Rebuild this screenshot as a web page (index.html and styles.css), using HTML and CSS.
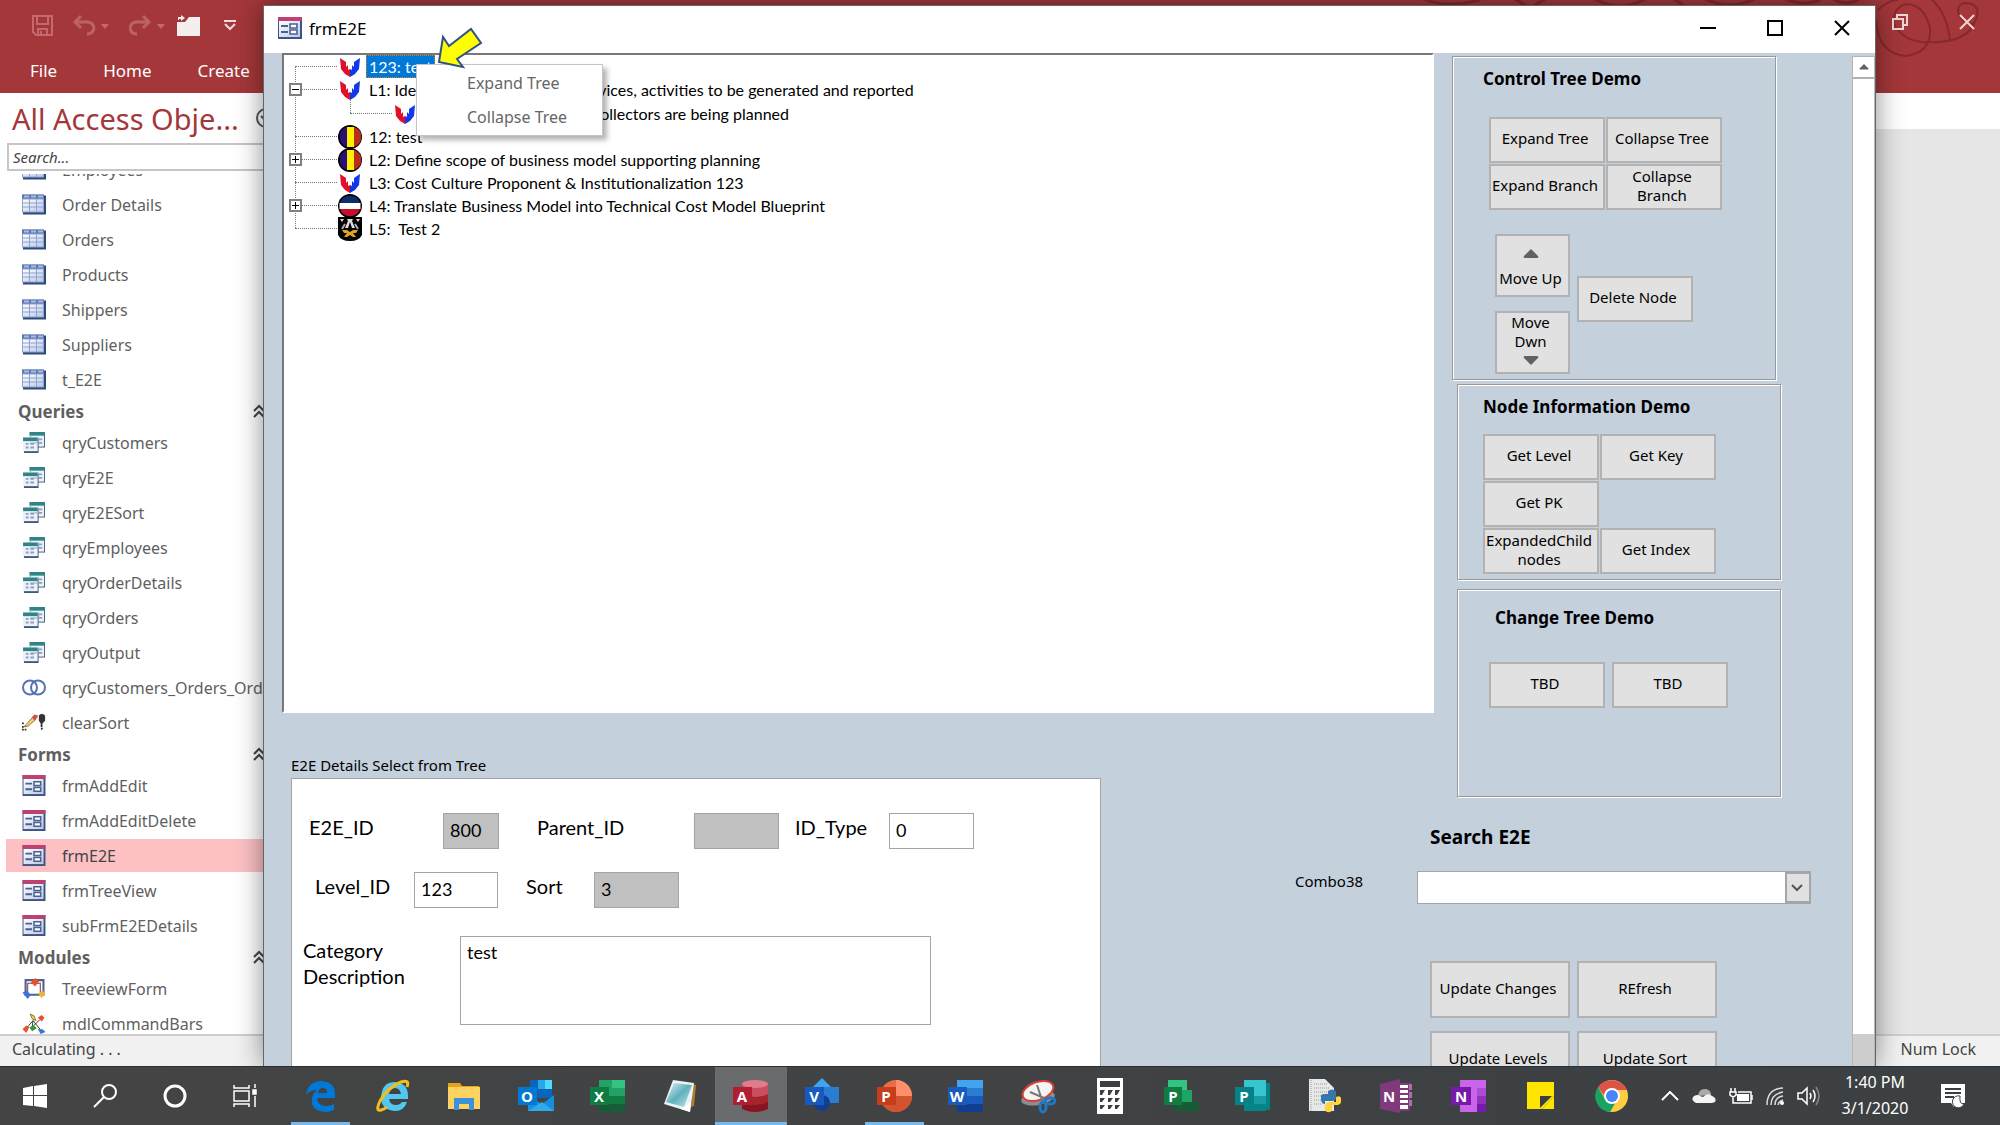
FILE: index.html
```html
<!DOCTYPE html>
<html lang="en">
  <head>
    <meta charset="UTF-8" />
    <meta name="viewport" content="width=device-width, initial-scale=1.0" />
    <title>frmE2E</title>
    <link rel="stylesheet" href="styles.css">
  </head>

  <body>
    <!-- shared icons -->
    <svg class="defs" aria-hidden="true">
      <defs>
        <linearGradient id="cell" x1="0" y1="0" x2="1" y2="1">
          <stop offset="0" stop-color="#fff" />
          <stop offset="1" stop-color="#b9c9ea" />
        </linearGradient>
        <linearGradient id="glass" x1="0" y1="0" x2="1" y2="1">
          <stop offset="0" stop-color="#e4f3f5" />
          <stop offset=".5" stop-color="#5fb0bd" />
          <stop offset="1" stop-color="#c9e8ec" />
        </linearGradient>
      </defs>
      <symbol id="table" viewBox="0 0 24 20">
        <path fill="#2f4a78" d="M1 1h23v19H1z" />
        <path fill="#8fa3cc" d="M0 0h22v18H0z" />
        <path fill="#5c78b8" d="M0 0h22v4H0z" />
        <path fill="#a9bbdf" d="M2 1h5v2H2zM9 1h5v2H9zM16 1h5v2h-5z" />
        <path fill="url(#cell)" d="M1 5h6v3H1zM8 5h6v3H8zM15 5h6v3h-6zM1 9h6v3H1zM8 9h6v3H8zM15 9h6v3h-6zM1 13h6v4H1zM8 13h6v4H8zM15 13h6v4h-6z" />
      </symbol>
      <symbol id="query" viewBox="0 0 24 23">
        <path fill="#3f5878" d="M8 1h16v16H8z" />
        <path fill="#edf2fa" d="M8 0h15v16H8z" />
        <path fill="#2f8585" d="M7 0h17v4H7z" />
        <path fill="#8fa0bd" d="M17 7h4v2h-4zM17 11h4v2h-4z" />
        <path fill="#3f5878" d="M1 7h16v16H1z" />
        <path fill="#edf2fa" d="M0 6h16v15H0z" />
        <path fill="#2f8585" d="M0 6h16v4H0z" />
        <path fill="#8fa0bd" d="M3 12h3v2H3zM8 12h4v2H8zM3 16h3v2H3zM8 16h4v2H8z" />
        <path fill="none" stroke="#8aa6ba" d="M8 6V3m0 9h9V6" />
      </symbol>
      <symbol id="union" viewBox="0 0 24 16">
        <g fill="none" stroke="#5673b8" stroke-width="2">
          <ellipse cx="8" cy="8" rx="7" ry="7" />
          <ellipse cx="16" cy="8" rx="7" ry="7" />
        </g>
      </symbol>
      <symbol id="erase" viewBox="0 0 27 20">
        <path fill="#333" d="M0 10h2v2H0zM3 13h2v2H3zM0 14h2v2H0zM0 17h2v2H0zM3 17h2v2H3z" />
        <path fill="#f0d070" stroke="#8a6b2a" d="M4 13 12 4l3 3-8 7-4 1z" />
        <path fill="#cf5246" d="m11 4 3-3 4 1-1 3-3 3z" />
        <path fill="#333" d="M19 2q3-3 7 0v6l-3 3v4h-2v-4l-2-3zM21 16h3l-2 3z" />
      </symbol>
      <symbol id="form" viewBox="0 0 24 22">
        <path fill="#3f5380" d="M0 0h24v22H0z" />
        <path fill="url(#cell)" d="M1 4h21v16H1z" />
        <path fill="#c0406f" d="M0 0h24v4H0z" />
        <path fill="#4a608f" d="M3 8h7v2H3zM3 14h7v2H3z" />
        <path fill="#fff" stroke="#4a608f" stroke-width="1.6" d="M12 7h7v4h-7zM12 13h7v4h-7z" />
      </symbol>
      <symbol id="module" viewBox="0 0 22 20">
        <path fill="#fff" stroke="#4c648f" stroke-width="2" d="M3 2h17v14H3z" />
        <path fill="none" stroke="#8a4040" d="M5 15V5h12v10" />
        <path fill="#e8502c" d="m8 4 4-4 4 3-4 5z" />
        <path fill="#3d72d8" d="m0 14 4-2 4 4-3 4z" />
        <path fill="#e6b92e" d="m15 15 4-3 3 3-4 4z" />
      </symbol>
      <symbol id="classmod" viewBox="0 0 24 22">
        <path fill="none" stroke="#333" d="m4 16 7-8 9 11M11 8l-1 7 8-8" />
        <path fill="#e8d45a" stroke="#8a7a2a" d="m8 1 4 2 2 5-4-2z" />
        <path fill="#e8502c" d="m16 5 4-3 3 3-3 4zM0 17l4-4 3 2-3 6z" />
        <path fill="#3a9a3a" d="m7 15 5-2 3 3-5 3z" />
        <path fill="#3d72d8" d="m16 17 5 0 3 3-5 2z" />
      </symbol>
      <symbol id="shield" viewBox="0 0 24 24">
        <path fill="#e0102c" d="m2 3 6 4v5l2-2v5l2-1v8l-5-3-4-5z" />
        <path fill="#1238e8" d="m22 3-6 4v5l-2-2v5l-2-1v8l5-3 4-5z" />
      </symbol>
      <symbol id="tricolor" viewBox="0 0 24 24">
        <circle cx="12" cy="12" r="12" fill="#000" />
        <path fill="#2b0f78" d="M9 2v20A10.500 10.500 0 0 1 9 2z" />
        <path fill="#fff000" d="M9 2h7v20H9z" />
        <path fill="#b92d1c" d="M16 2a10.500 10.500 0 0 1 0 20z" />
      </symbol>
      <symbol id="bands" viewBox="0 0 24 24">
        <circle cx="12" cy="12" r="12" fill="#000" />
        <path fill="#0f2d68" d="M2 9a10.500 10.500 0 0 1 20 0z" />
        <path fill="#fff" d="M1.500 9h21v6h-21z" />
        <path fill="#c2102c" d="M2 15a10.500 10.500 0 0 0 20 0z" />
      </symbol>
      <symbol id="crest" viewBox="0 0 24 24">
        <path d="M0 0h24v18q-3 6-12 6T0 18z" />
        <path fill="#ddd" d="M2 2h4L4 5zM22 2h-4l2 3zM9 2h6l-1 2 3 7h-3l-2-6-2 6H7l3-7z" />
        <path fill="none" stroke="#aaa" stroke-width="2" d="m4 12 3-5m13 5-3-5" />
        <path fill="#e3a31c" d="M4 13h5l3 2 3-2h5l-2 3h-3l3 4h-3l-3-2-3 2H6l3-4H6z" />
      </symbol>
      <symbol id="up" viewBox="0 0 16 10"><path fill="#5f6366" d="M2 9q-2 0-1-2l7-7 7 7q1 2-1 2z" /></symbol>
      <symbol id="chev" viewBox="0 0 12 14">
        <path fill="none" stroke="#444" stroke-width="2" d="m1 7 5-5 5 5M1 13l5-5 5 5" />
      </symbol>
    </svg>

    <main class="access">
      <header class="ribbon">
        <svg class="swirl" width="600" height="93" viewBox="0 0 600 93" aria-hidden="true">
          <g fill="none" stroke="#86282c" stroke-width="3">
            <path d="M20-4q20 14 60 4M110-4l20 12 20-12M190-4q30 20 60 0M270-4l14 10M300-4q30 18 60 0M380-4q20 12 40 4M430-4q14 14 34 0" />
            <path stroke-width="2" d="M476 20q2 34 30 36 26-4 24-28-6-24-24-24-14 4-12 20 8 16 28 18 36 2 48-12 14-20 2-26-14-4-14 8 4 12 16 12M478 10q10-10 20-10M528-4q20 16 22 46" />
          </g>
        </svg>
        <div class="quick">
          <button aria-label="Save">
            <svg width="21" height="21" viewBox="0 0 21 21" fill="none" stroke="#c26a6d" stroke-width="2">
              <path d="M1 1h19v19H4l-3-3zM5 1v8h11V1M6 20v-6h9v6M9 16v3" />
            </svg>
          </button>
          <button aria-label="Undo">
            <svg width="36" height="21" viewBox="0 0 36 21" fill="none" stroke="#bd6265" stroke-width="3">
              <path d="M8 1 2 7l6 6M2 7h12q6 0 7 6-1 6-7 6" /><path fill="#c26a6d" stroke="none" d="M28 9h8l-4 5z" />
            </svg>
          </button>
          <button aria-label="Redo">
            <svg width="36" height="21" viewBox="0 0 36 21" fill="none" stroke="#bd6265" stroke-width="3">
              <path d="m14 1 6 6-6 6M20 7H8q-6 0-7 6 1 6 7 6" /><path fill="#c26a6d" stroke="none" d="M28 9h8l-4 5z" />
            </svg>
          </button>
          <button aria-label="Open">
            <svg width="23" height="21" viewBox="0 0 23 21" fill="#f3efee">
              <path d="M0 7h8l4-5h11v19H0zM1 5V2h3V0l4 3-4 3V4H2v1z" />
            </svg>
          </button>
          <button class="more" aria-label="Customize toolbar">
            <svg width="12" height="11" viewBox="0 0 12 11" fill="none" stroke="#f0d9da" stroke-width="2">
              <path d="M0 1h12M1 4l5 5 5-5" />
            </svg>
          </button>
        </div>
        <nav class="tabs">
          <a href="#">File</a>
          <a href="#">Home</a>
          <a href="#">Create</a>
        </nav>
        <div class="app-controls">
          <button aria-label="Restore">
            <svg width="16" height="16" viewBox="0 0 16 16" fill="none" stroke="#f1d4d5" stroke-width="2">
              <path d="M1 5h10v10H1zM5 5V1h10v10h-4" />
            </svg>
          </button>
          <button aria-label="Close">
            <svg width="16" height="16" viewBox="0 0 16 16" stroke="#f1d4d5" stroke-width="2"><path d="m1 1 14 14M15 1 1 15" /></svg>
          </button>
        </div>
      </header>

      <div class="workspace">
        <aside class="objects">
          <div class="objects-title">
            <h1>All Access Obje...</h1>
            <svg width="21" height="21" viewBox="0 0 21 21" fill="none" stroke="#555" stroke-width="2">
              <circle cx="10" cy="10" r="9" /><path d="m5 8 5 5 5-5" />
            </svg>
          </div>
          <input class="search-box" type="text" placeholder="Search..." aria-label="Search">
          <div class="object-list">
            <ul>
              <li><svg class="icon"><use href="#table" /></svg>Employees</li>
              <li><svg class="icon"><use href="#table" /></svg>Order Details</li>
              <li><svg class="icon"><use href="#table" /></svg>Orders</li>
              <li><svg class="icon"><use href="#table" /></svg>Products</li>
              <li><svg class="icon"><use href="#table" /></svg>Shippers</li>
              <li><svg class="icon"><use href="#table" /></svg>Suppliers</li>
              <li><svg class="icon"><use href="#table" /></svg>t_E2E</li>
            </ul>
            <h2>Queries <svg width="12" height="14"><use href="#chev" /></svg></h2>
            <ul>
              <li><svg class="icon"><use href="#query" /></svg>qryCustomers</li>
              <li><svg class="icon"><use href="#query" /></svg>qryE2E</li>
              <li><svg class="icon"><use href="#query" /></svg>qryE2ESort</li>
              <li><svg class="icon"><use href="#query" /></svg>qryEmployees</li>
              <li><svg class="icon"><use href="#query" /></svg>qryOrderDetails</li>
              <li><svg class="icon"><use href="#query" /></svg>qryOrders</li>
              <li><svg class="icon"><use href="#query" /></svg>qryOutput</li>
              <li><svg class="icon"><use href="#union" /></svg>qryCustomers_Orders_Ord...</li>
              <li><svg class="icon"><use href="#erase" /></svg>clearSort</li>
            </ul>
            <h2>Forms <svg width="12" height="14"><use href="#chev" /></svg></h2>
            <ul>
              <li><svg class="icon"><use href="#form" /></svg>frmAddEdit</li>
              <li><svg class="icon"><use href="#form" /></svg>frmAddEditDelete</li>
              <li class="active"><svg class="icon"><use href="#form" /></svg>frmE2E</li>
              <li><svg class="icon"><use href="#form" /></svg>frmTreeView</li>
              <li><svg class="icon"><use href="#form" /></svg>subFrmE2EDetails</li>
            </ul>
            <h2>Modules <svg width="12" height="14"><use href="#chev" /></svg></h2>
            <ul>
              <li><svg class="icon"><use href="#module" /></svg>TreeviewForm</li>
              <li><svg class="icon"><use href="#classmod" /></svg>mdlCommandBars</li>
            </ul>
          </div>
        </aside>
        <div class="canvas"></div>
      </div>

      <footer class="status">
        <span>Calculating . . .</span>
        <span>Num Lock</span>
      </footer>

      <section class="window">
        <div class="window-title">
          <svg width="24" height="22"><use href="#form" /></svg>
          <span>frmE2E</span>
          <div class="window-controls">
            <button aria-label="Minimize"><svg width="16" height="16" stroke="#000" stroke-width="2"><path d="M0 8h16" /></svg></button>
            <button aria-label="Maximize"><svg width="16" height="16" stroke="#000" stroke-width="2" fill="none"><path d="M1 1h14v14H1z" /></svg></button>
            <button aria-label="Close"><svg width="16" height="16" stroke="#000" stroke-width="2"><path d="m1 1 14 14M15 1 1 15" /></svg></button>
          </div>
        </div>

        <div class="window-body">
          <div class="form">
            <div class="tree">
              <ul>
                <li><div class="node"><svg><use href="#shield" /></svg><span class="selected">123: test</span></div></li>
                <li>
                  <div class="node"><button class="toggle open" aria-label="Collapse"></button><svg><use href="#shield" /></svg><span>L1: Identify output, products, services, activities to be generated and reported</span></div>
                  <ul>
                    <li><div class="node"><svg><use href="#shield" /></svg><span>L1.1: Verify that all cost collectors are being planned</span></div></li>
                  </ul>
                </li>
                <li><div class="node"><svg><use href="#tricolor" /></svg><span>12: test</span></div></li>
                <li><div class="node"><button class="toggle" aria-label="Expand"></button><svg><use href="#tricolor" /></svg><span>L2: Define scope of business model supporting planning</span></div></li>
                <li><div class="node"><svg><use href="#shield" /></svg><span>L3: Cost Culture Proponent &amp; Institutionalization 123</span></div></li>
                <li><div class="node"><button class="toggle" aria-label="Expand"></button><svg><use href="#bands" /></svg><span>L4: Translate Business Model into Technical Cost Model Blueprint</span></div></li>
                <li><div class="node"><svg><use href="#crest" /></svg><span>L5: &nbsp;Test 2</span></div></li>
              </ul>

              <div class="context-menu">
                <button>Expand Tree</button>
                <button>Collapse Tree</button>
              </div>
              <svg class="pointer" width="46" height="42" viewBox="0 0 46 42">
                <path fill="#ff0" stroke="#2f528f" stroke-width="2" d="M2 35 6 10l6 9L34 2l10 14-24 16 6 8z" />
              </svg>
            </div>

            <div class="panels">
              <section class="panel control">
                <h3>Control Tree Demo</h3>
                <div class="btn-grid">
                  <button>Expand Tree</button>
                  <button>Collapse Tree</button>
                  <button>Expand Branch</button>
                  <button>Collapse<br>Branch</button>
                </div>
                <div class="move">
                  <div class="move-col">
                    <button><svg width="16" height="10"><use href="#up" /></svg>Move Up</button>
                    <button>Move Dwn<svg class="flip" width="16" height="10"><use href="#up" /></svg></button>
                  </div>
                  <button>Delete Node</button>
                </div>
              </section>
              <section class="panel info">
                <h3>Node Information Demo</h3>
                <div class="btn-grid">
                  <button>Get Level</button>
                  <button>Get Key</button>
                  <button class="first">Get PK</button>
                  <button class="first">ExpandedChild nodes</button>
                  <button>Get Index</button>
                </div>
              </section>
              <section class="panel change">
                <h3>Change Tree Demo</h3>
                <div class="btn-grid">
                  <button>TBD</button>
                  <button>TBD</button>
                </div>
              </section>
            </div>

            <div class="details">
              <h4>E2E Details Select from Tree</h4>
              <form class="details-box">
                <div class="fields ids">
                  <label for="e2e">E2E_ID</label>
                  <input id="e2e" type="text" value="800" readonly>
                  <label for="parent">Parent_ID</label>
                  <input id="parent" type="text" value="" readonly>
                  <label for="type">ID_Type</label>
                  <input id="type" type="text" value="0">
                </div>
                <div class="fields levels">
                  <label for="level">Level_ID</label>
                  <input id="level" type="text" value="123">
                  <label for="sort">Sort</label>
                  <input id="sort" type="text" value="3" readonly>
                </div>
                <div class="fields category">
                  <label for="cat">Category Description</label>
                  <textarea id="cat">test</textarea>
                </div>
              </form>
            </div>

            <div class="search">
              <h3>Search E2E</h3>
              <label for="combo">Combo38</label>
              <div class="combo">
                <select id="combo"><option></option></select>
                <svg width="26" height="31" viewBox="0 0 26 31"><path fill="#e1e1e1" stroke="#a5a5a5" stroke-width="2" d="M1 1h24v29H1z" /><path fill="none" stroke="#555" stroke-width="2" d="m7 13 5 5 5-5" /></svg>
              </div>
              <div class="actions">
                <button>Update Changes</button>
                <button>REfresh</button>
                <button>Update Levels</button>
                <button>Update Sort</button>
              </div>
            </div>
          </div>

          <div class="scrollbar">
            <button aria-label="Scroll up"><svg width="10" height="6"><use href="#up" /></svg></button>
            <div class="thumb"></div>
          </div>
        </div>
      </section>
    </main>

    <footer class="taskbar">
      <div class="system">
        <button aria-label="Start"><svg width="24" height="24" viewBox="0 0 24 24" fill="#fff"><path d="m0 4 10-2v9H0zM11 2l13-2v11H11zM0 12h10v10L0 21zM11 12h13v12l-13-2z" /></svg></button>
        <button aria-label="Search"><svg width="24" height="24" viewBox="0 0 24 24" fill="none" stroke="#fff" stroke-width="2"><circle cx="16" cy="8" r="7" /><path d="M11 13 1 23" /></svg></button>
        <button aria-label="Cortana"><svg width="24" height="24" viewBox="0 0 24 24" fill="none" stroke="#fff" stroke-width="3"><circle cx="12" cy="12" r="10" /></svg></button>
        <button aria-label="Task View"><svg width="24" height="24" viewBox="0 0 24 24" fill="none" stroke="#fff" stroke-width="1.500"><path d="M1 1v3h15V1M1 7h15v10H1zM1 23v-3h15v3M22 0v4M22 12v11" /><path fill="#fff" d="M20 6h3v4h-3z" /></svg></button>
      </div>
      <div class="pinned">
        <button class="running" aria-label="Edge"><svg viewBox="0 0 36 36"><path fill="#0078d7" fill-rule="evenodd" d="M3 17Q5 3 19 3q13 1 13 13v4H14q1 8 9 8 5 0 8-2v6q-4 2-9 2Q7 33 9 20q1-5 5-8-7 0-11 5zM15 15h9q0-5-4-5-4 0-5 5z" /></svg></button>
        <button aria-label="Internet Explorer"><svg viewBox="0 0 36 36"><path fill="#52c8f0" fill-rule="evenodd" d="M6 19Q7 4 20 4q13 1 13 14v3H14q1 6 7 6 4 0 6-3h5q-3 9-12 9Q6 32 6 19zm8-3h12q-1-6-6-6-5 0-6 6z" /><path fill="none" stroke="#f2bd1d" stroke-width="3" d="M32 9q3-8-6-5Q12 10 5 23 0 34 6 32q4-1 6-3" /></svg></button>
        <button aria-label="File Explorer"><svg viewBox="0 0 36 36"><path fill="#e5a21b" d="M2 5h12l2 3h17v5H2z" /><path fill="#fdd162" d="M2 9h32v22H2z" /><path fill="#3a93d8" d="M8 32V20h20v12h-5v-6H13v6z" /></svg></button>
        <button aria-label="Outlook"><svg viewBox="0 0 36 36"><path fill="#0a64b8" d="M12 2h22v18H12z" /><path fill="#28a8ea" d="M20 2h7v9h-7z" /><path fill="#50d9ff" d="M27 2h7v9h-7z" /><path fill="#1490df" d="m10 18 14 8 12-9v16H10z" /><path fill="#32a9ec" d="m10 33 14-9 12 9z" /><path fill="#0078d4" d="M0 9h19v18H0z" /><text x="9" y="24">O</text></svg></button>
        <button aria-label="Excel"><svg viewBox="0 0 36 36"><path fill="#21a366" d="M9 2h26v32H9z" /><path fill="#33c481" d="M22 2h13v8H22z" /><path fill="#107c41" d="M9 18h26v8H9z" /><path fill="#185c37" d="M9 26h26v8H9z" /><path fill="#107c41" d="M0 9h19v18H0z" /><text x="9" y="24">X</text></svg></button>
        <button aria-label="Notepad"><svg viewBox="0 0 36 36"><path fill="#b07c30" d="m31 6 3 1-2 21-3 1z" /><path fill="#e9f3f4" d="m11 2 21 3-4 29L2 26z" /><path fill="url(#glass)" d="m12 5 18 2-8 22L4 24z" /><path fill="#fff" d="m29 24-1 10-9-3z" /></svg></button>
        <button class="current" aria-label="Access"><svg viewBox="0 0 36 36"><path fill="#c94f60" d="M9 5h26v25q-6 4-13 4T9 30z" /><path fill="#a4262c" d="M9 16q13 6 26 0v14q-6 4-13 4T9 30z" /><path fill="#881421" d="M9 24q13 6 26 0v7q-13 6-26 0z" /><ellipse cx="22" cy="6" rx="13" ry="4" fill="#e07c8c" /><path fill="#b01e34" d="M0 9h19v18H0z" /><text x="9" y="24">A</text></svg></button>
        <button aria-label="Visio"><svg viewBox="0 0 36 36"><path fill="#41a5ee" d="m17 0 10 10-10 10L7 10z" /><path fill="#2b7cd3" d="M18 9h16v16H18z" /><circle cx="17" cy="25" r="8" fill="#103f91" /><path fill="#185abd" d="M0 9h19v18H0z" /><text x="9" y="24">V</text></svg></button>
        <button class="running" aria-label="PowerPoint"><svg viewBox="0 0 36 36"><circle cx="19" cy="18" r="16" fill="#ed6c47" /><path fill="#ff8f6b" d="M19 2a16 16 0 0 1 16 16H19z" /><path fill="#d35230" d="M35 18a16 16 0 0 1-32 0z" /><path fill="#c43e1c" d="M0 9h19v18H0z" /><text x="9" y="24">P</text></svg></button>
        <button aria-label="Word"><svg viewBox="0 0 36 36"><path fill="#41a5ee" d="M9 2h26v8H9z" /><path fill="#2b7cd3" d="M9 10h26v8H9z" /><path fill="#185abd" d="M9 18h26v8H9z" /><path fill="#103f91" d="M9 26h26v8H9z" /><path fill="#185abd" d="M0 9h19v18H0z" /><text x="9" y="24">W</text></svg></button>
        <button aria-label="Snipping Tool"><svg viewBox="0 0 36 36"><ellipse cx="18" cy="20" rx="17" ry="7" fill="#8b8e90" transform="rotate(-10 18 20)" /><ellipse cx="18" cy="13" rx="16" ry="9" fill="#f4f4f4" stroke="#d4423a" stroke-width="2" transform="rotate(-20 18 13)" /><path fill="none" stroke="#777" stroke-width="2" d="m17 7 5 15M10 14l14 6" /><g fill="none" stroke="#1f78c4" stroke-width="3"><ellipse cx="30" cy="23" rx="5" ry="3" /><ellipse cx="23" cy="29" rx="3" ry="5" /></g></svg></button>
        <button aria-label="Calculator"><svg viewBox="0 0 36 36"><path fill="#fff" d="M5 0h26v36H5z" /><path fill="#3c3f42" d="M8 3h20v6H8zM8 12h5l-3 5H8zM16 12h5l-3 5h-2zM23 12h5l-3 5h-2zM8 20h5l-3 4H8zM16 20h5l-3 4h-2zM23 20h5l-3 4h-2zM8 27h5l-3 4H8zM16 27h5l-3 4h-2zM23 27h5l-3 4h-2z" /></svg></button>
        <button aria-label="Project"><svg viewBox="0 0 36 36"><path fill="#33c481" d="M4 2h19v11H4z" /><path fill="#21a366" d="M12 12h16v12H12z" /><path fill="#185c37" d="M10 24h25v9H10z" /><path fill="#107c41" d="M0 9h18v18H0z" /><text x="9" y="24">P</text></svg></button>
        <button aria-label="Publisher"><svg viewBox="0 0 36 36"><path fill="#038387" d="M20 5h15v27H20z" /><path fill="#37c6d0" d="M9 2h22v16H9z" /><path fill="#1a9ba1" d="M9 18h22v8H9z" /><path fill="#058387" d="M9 26h22v7H9z" /><path fill="#038387" d="M0 9h19v18H0z" /><text x="9" y="24">P</text></svg></button>
        <button aria-label="Python"><svg viewBox="0 0 36 36"><path fill="#e8e8e8" d="M2 1h16l9 9v23H2z" /><path stroke="#999" stroke-dasharray="1 1" d="M4 2v31M7 6h14M7 10h16M7 14h16M7 18h10M7 22h8M7 26h8" /><path fill="#3776ab" d="M14 21v-3q0-2 3-2h4v-3q4-3 8 0v7q-1 3-4 3h-7v3q-4 0-4-5z" /><path fill="#ffd43b" d="M34 20v4q0 2-3 3h-6v6q-5 3-7-1v-4q1-4 5-4h6v-5q4-2 5 1z" /></svg></button>
        <button aria-label="OneNote 2016"><svg viewBox="0 0 36 36"><path fill="#fff" stroke="#80397b" stroke-width="2" d="M18 6h12v26H18z" /><path fill="#80397b" d="M20 10h9v2h-9zM20 15h9v2h-9zM20 20h9v2h-9zM20 25h9v2h-9z" /><path fill="#a872a5" d="M30 6h3v6h-3zM30 14h3v6h-3zM30 22h3v6h-3z" /><path fill="#80397b" d="m1 6 20-5v34L1 31z" /><text x="10" y="24">N</text></svg></button>
        <button aria-label="OneNote"><svg viewBox="0 0 36 36"><path fill="#ca64ea" d="M9 2h26v32H9z" /><path fill="#ae4bd5" d="M26 10h9v8h-9z" /><path fill="#9332bf" d="M26 18h9v8h-9z" /><path fill="#7719aa" d="M26 26h9v8h-9zM0 9h20v18H0z" /><text x="10" y="24">N</text></svg></button>
        <button aria-label="Sticky Notes"><svg viewBox="0 0 36 36"><path fill="#ffe400" d="M5 4h27v14L20 31H5z" /><path fill="#3c3f42" d="M18 18h12L18 30z" /><path fill="#ffe400" d="M32 18v13H20z" /></svg></button>
        <button aria-label="Chrome"><svg viewBox="0 0 36 36"><circle cx="18" cy="18" r="16" fill="#ffcd40" /><path fill="#de5347" d="M4 9a17 17 0 0 1 29 3H18l-7 7z" /><path fill="#1aa260" d="M4 9a16 16 0 0 0 12 25l7-12-12-1z" /><circle cx="18" cy="18" r="8" fill="#fff" /><circle cx="18" cy="18" r="6" fill="#4587f3" /></svg></button>
      </div>
      <div class="tray">
        <svg width="18" height="10" viewBox="0 0 18 10" fill="none" stroke="#fff" stroke-width="2"><path d="m1 9 8-8 8 8" /></svg>
        <svg width="24" height="16" viewBox="0 0 24 16"><path fill="#aaa" d="M6 8q1-8 8-7 5 1 5 6z" /><path fill="#f4f4f4" d="M4 15q-6-3-2-7 4-2 6 0l3 1q5-5 9-1 5 2 3 6l-3 1z" /></svg>
        <svg width="24" height="17" viewBox="0 0 24 17" fill="none" stroke="#fff" stroke-width="1.500"><path d="M2 0v4M6 0v4M1 4h6v3l-3 2-3-2zM4 9v6h18V4H9" /><path d="M23 7v5" /><path fill="#fff" stroke="none" d="M8 6h12v7H8z" /></svg>
        <svg width="18" height="18" viewBox="0 0 18 18" fill="none" stroke="#ddd" stroke-width="1.500"><path d="M1 18Q1 2 17 1M5 18Q5 7 17 5M9 18q0-8 8-9M12 18q1-4 5-5" /><circle cx="16" cy="16" r="2" fill="#fff" stroke="none" /></svg>
        <svg width="24" height="20" viewBox="0 0 24 20" fill="none" stroke="#fff" stroke-width="1.500"><path d="M1 7h4l5-5v16l-5-5H1zM13 7q2 3 0 6M16 4q4 6 0 12" /><path stroke="#888" d="M19 1q6 9 0 18" /></svg>
        <div class="clock"><span>1:40 PM</span><span>3/1/2020</span></div>
        <svg width="24" height="24" viewBox="0 0 24 24"><path fill="#fff" d="M0 0h24v19h-8l-3 4-3-4H0z" /><path stroke="#3c3f42" stroke-width="2" d="M4 5h16M4 9h16M4 13h9" /><path fill="#fff" stroke="#3c3f42" d="M19 12a6 6 0 1 0 4 8q-5 0-4-8z" /></svg>
      </div>
    </footer>
  </body>
</html>
```
FILE: styles.css
```css
* {
  padding: 0;
  margin: 0;
  box-sizing: border-box;
}
body {
  height: 100vh;
  display: flex;
  flex-direction: column;
  overflow: hidden;
  font-family: "Noto Sans", "Open Sans", sans-serif;
  font-size: 16px;
  color: #000;
}
ul {
  list-style: none;
}
button {
  font: inherit;
  color: inherit;
  background: none;
  border: none;
}
svg {
  display: block;
  flex: none;
}
.defs {
  position: absolute;
  width: 0;
  height: 0;
}

/* main application */
.access {
  position: relative;
  flex: 1;
  min-height: 0;
  display: flex;
  flex-direction: column;
}
.ribbon {
  position: relative;
  height: 93px;
  flex: none;
  background: #a4373a;
  color: #fff;
  overflow: hidden;
}
.swirl {
  position: absolute;
  top: 0;
  right: 0;
}
.quick {
  display: flex;
  align-items: center;
  height: 50px;
  padding-left: 32px;
  gap: 20px;
}
.quick button:nth-child(4) {
  margin-left: -8px;
}
.quick .more {
  margin-left: 4px;
}
.tabs {
  display: flex;
  gap: 46px;
  padding-left: 30px;
}
.tabs a {
  color: #fff;
  text-decoration: none;
  font-size: 17px;
  line-height: 42px;
}
.app-controls {
  position: absolute;
  top: 14px;
  right: 25px;
  display: flex;
  gap: 51px;
}
.workspace {
  flex: 1;
  min-height: 0;
  display: flex;
  background: #e6e6e6;
}
.objects {
  width: 300px;
  display: flex;
  flex-direction: column;
  background: #fff;
}
.objects-title {
  display: flex;
  align-items: center;
  padding-left: 12px;
  height: 50px;
  gap: 14px;
}
.objects-title h1 {
  width: 230px;
  font-size: 29px;
  font-weight: normal;
  color: #a4373a;
  white-space: nowrap;
}
.search-box {
  height: 28px;
  flex: none;
  margin: 0 0 3px 7px;
  padding: 0 4px;
  border: 2px solid #c6c6c6;
  font: italic 15px "Noto Sans", sans-serif;
}
.search-box::placeholder {
  color: #444;
}
.object-list {
  flex: 1;
  min-height: 0;
  overflow: hidden;
  color: #5f5f5f;
}
.object-list ul:first-child {
  margin-top: -22px;
}
.object-list li {
  display: flex;
  align-items: center;
  height: 35px;
  gap: 16px;
  padding-left: 22px;
  white-space: nowrap;
}
.object-list .icon {
  width: 24px;
  height: 21px;
}
.object-list h2 {
  display: flex;
  align-items: center;
  justify-content: space-between;
  height: 28px;
  padding: 0 35px 0 18px;
  font-size: 17px;
}
.object-list .active {
  color: #444;
  background: linear-gradient(#fdc1c4, #fdc1c4) 6px 1px / 100% 33px no-repeat;
}
.canvas {
  flex: 1;
  border-top: 36px solid #fff;
}
.status {
  height: 32px;
  flex: none;
  display: flex;
  align-items: center;
  justify-content: space-between;
  padding: 0 24px 4px 12px;
  border-top: 2px solid #cfcfcf;
  background: #f1f1f1;
  color: #444;
}

/* form window */
.window {
  position: absolute;
  top: 5px;
  left: 263px;
  right: 124px;
  bottom: 0;
  display: flex;
  flex-direction: column;
  border: 1px solid #666;
  border-bottom: none;
  background: #c5d0dd;
  box-shadow: 0 0 26px rgba(0, 0, 0, 0.45);
}
.window-title {
  display: flex;
  align-items: center;
  gap: 7px;
  height: 47px;
  flex: none;
  padding: 0 25px 3px 14px;
  background: #fff;
  font-size: 17px;
}
.window-controls {
  display: flex;
  gap: 51px;
  margin-left: auto;
}
.window-body {
  flex: 1;
  min-height: 0;
  display: flex;
}
.form {
  flex: 1;
  display: grid;
  grid-template-columns: 810px 1fr 400px;
  grid-template-rows: 660px 100px auto;
  padding-left: 18px;
}
.tree {
  position: relative;
  grid-column: 1 / 3;
  margin-right: 18px;
  padding-left: 11px;
  background: #fff;
  border: 2px solid #fff;
  border-top-color: #777;
  border-left-color: #777;
  font: 16px/23px Lato, Arial, sans-serif;
}
.tree ul {
  position: relative;
}
.tree ul::before {
  content: "";
  position: absolute;
  top: 12px;
  bottom: 12px;
  left: 0;
  border-left: 1px dotted #777;
}
.tree ul ul {
  margin: 1px 0 0 55px;
}
.tree ul ul::before {
  top: -3px;
}
.node {
  position: relative;
  display: flex;
  align-items: center;
  height: 23px;
  white-space: nowrap;
}
.node::before {
  content: "";
  width: 42px;
  margin-right: 1px;
  border-top: 1px dotted #777;
}
.node svg {
  width: 24px;
  height: 24px;
  margin-right: 4px;
}
.node span {
  padding: 0 3px;
}
.node .selected {
  color: #fff;
  background: #0078d7;
  outline: 1px dotted #e08020;
  outline-offset: -1px;
}
.toggle {
  position: absolute;
  left: -6px;
  width: 13px;
  height: 13px;
  border: 2px solid #808080;
  background:
    linear-gradient(#000, #000) center / 7px 1px no-repeat,
    linear-gradient(#000, #000) center / 1px 7px no-repeat,
    #fff;
}
.toggle.open {
  background: linear-gradient(#000, #000) center / 7px 1px no-repeat, #fff;
}
.context-menu {
  position: absolute;
  top: 9px;
  left: 132px;
  width: 187px;
  padding: 1px 0;
  background: #fff;
  border: 1px solid #c4c4c4;
  box-shadow: 4px 4px 5px rgba(0, 0, 0, 0.3);
  font-family: "Noto Sans", sans-serif;
  color: #666;
}
.context-menu button {
  display: block;
  width: 100%;
  height: 34px;
  padding-left: 50px;
  text-align: left;
}
.pointer {
  position: absolute;
  top: -28px;
  left: 153px;
}

.panels {
  grid-column: 3;
  grid-row: 1 / 3;
  padding-top: 3px;
}
.panel {
  width: 324px;
  border: 1px solid #999;
  box-shadow: inset 1px 1px 0 #fff, 1px 1px 0 #fff;
}
.panel h3,
.search h3 {
  font-size: 17px;
  line-height: 24px;
}
.control {
  height: 324px;
  padding: 10px 0 0 36px;
}
.info,
.change {
  margin-left: 5px;
}
.info {
  height: 196px;
  margin-top: 4px;
  padding: 10px 0 0 25px;
}
.change {
  height: 208px;
  margin-top: 9px;
  padding: 16px 0 0 31px;
}
.control h3 {
  margin: 0 0 26px -6px;
}
.info h3 {
  margin-bottom: 15px;
}
.change h3 {
  margin: 0 0 32px 6px;
}
.btn-grid {
  display: grid;
  grid-template-columns: 116px 116px;
  grid-auto-rows: 46px;
  gap: 1px;
}
.change .btn-grid {
  column-gap: 7px;
}
.btn-grid .first {
  grid-column: 1;
}
.panel button,
.actions button {
  border: 2px solid #b2b2b2;
  background: #e1e1e1;
  font-size: 15px;
  line-height: 19px;
  padding: 0 4px 3px 0;
}
.move {
  display: flex;
  align-items: flex-start;
  gap: 7px;
  margin-top: 24px;
  padding-left: 6px;
}
.move > button {
  width: 116px;
  height: 46px;
  margin-top: 42px;
}
.move-col {
  display: grid;
  gap: 14px;
}
.move-col button {
  width: 75px;
  height: 63px;
  display: flex;
  flex-direction: column;
  align-items: center;
  justify-content: flex-end;
  gap: 10px;
  padding-bottom: 7px;
}
.move-col button:last-child {
  gap: 4px;
}
.flip {
  transform: rotate(180deg);
}

.details {
  grid-column: 1;
  grid-row: 2 / 4;
  margin-left: 9px;
  padding-top: 39px;
}
.details h4 {
  font-size: 15px;
  font-weight: normal;
  line-height: 26px;
}
.details-box {
  width: 810px;
  height: 400px;
  padding: 34px 0 0 11px;
  background: #fff;
  border: 1px solid #a5a5a5;
  font: 20px/26px Lato, sans-serif;
}
.fields {
  display: grid;
  align-items: start;
}
.fields input,
.fields textarea {
  width: 100%;
  height: 36px;
  padding: 0 6px 3px;
  border: 1px solid #a5a5a5;
  background: #fff;
  font: 18px/26px Lato, sans-serif;
  resize: none;
}
.fields input[readonly] {
  background: #c0c0c0;
}
.fields label {
  padding-top: 1px;
}
.ids {
  grid-template-columns: 134px 56px 38px 157px 85px 16px 94px 85px;
  margin-left: 6px;
}
.ids label:nth-of-type(2) {
  grid-column: 4;
}
.ids label:nth-of-type(3) {
  grid-column: 7;
}
.levels {
  grid-template-columns: 99px 84px 28px 68px 85px;
  margin: 23px 0 28px 12px;
}
.levels label:nth-of-type(2) {
  grid-column: 4;
}
.category {
  grid-template-columns: 157px 471px;
}
.category label {
  width: 120px;
}
.category textarea {
  height: 89px;
  padding-top: 2px;
}

.search {
  grid-column: 2 / 4;
  grid-row: 3;
  justify-self: end;
  display: grid;
  grid-template-columns: 122px 394px;
  padding: 12px 41px 0 0;
  height: 260px;
  align-content: start;
  font-size: 15px;
}
.search h3 {
  grid-column: 2;
  padding: 0 0 22px 13px;
  font-size: 19px;
}
.combo {
  position: relative;
}
.combo select {
  appearance: none;
  display: block;
  width: 100%;
  height: 33px;
  border: 1px solid #a5a5a5;
  border-radius: 0;
  background: #fff;
}
.combo svg {
  position: absolute;
  top: 1px;
  right: 0;
  pointer-events: none;
}
.actions {
  grid-column: 2;
  display: grid;
  grid-template-columns: 140px 140px;
  grid-auto-rows: 57px;
  gap: 13px 7px;
  margin: 57px 0 0 13px;
}

.scrollbar {
  width: 23px;
  flex: none;
  display: flex;
  flex-direction: column;
  margin-top: 3px;
  background: #cdcdcd;
  border: 1px solid #b5b5b5;
  border-bottom: none;
}
.scrollbar button {
  display: flex;
  align-items: center;
  justify-content: center;
  height: 22px;
  background: #fff;
  border-bottom: 2px solid #b0b0b0;
}
.thumb {
  flex: 1;
  margin-bottom: 32px;
  background: #fff;
}

/* taskbar */
.taskbar {
  position: relative;
  height: 59px;
  flex: none;
  display: flex;
  background: linear-gradient(90deg, #444, #3c4043);
  border-top: 1px solid #2e2f31;
}
.system {
  width: 285px;
  display: flex;
  align-items: center;
  padding-left: 23px;
  gap: 46px;
}
.pinned {
  flex: 1;
  display: flex;
}
.pinned button {
  flex: 1;
  display: flex;
  align-items: center;
  justify-content: center;
}
.pinned svg {
  width: 36px;
  height: 36px;
}
.pinned text {
  fill: #fff;
  font: bold 15px "Open Sans", sans-serif;
  text-anchor: middle;
}
.running,
.current {
  background: linear-gradient(#76b9ed, #76b9ed) center bottom / 59px 3px no-repeat;
}
.current {
  background: linear-gradient(#76b9ed, #76b9ed) center bottom / 100% 3px no-repeat, #6a6b6c;
}
.tray {
  width: 352px;
  display: flex;
  align-items: center;
  padding-left: 13px;
  gap: 13px;
  color: #fff;
}
.clock {
  width: 82px;
  display: flex;
  flex-direction: column;
  text-align: center;
  line-height: 26px;
  margin-right: 12px;
  padding-bottom: 2px;
}
```
